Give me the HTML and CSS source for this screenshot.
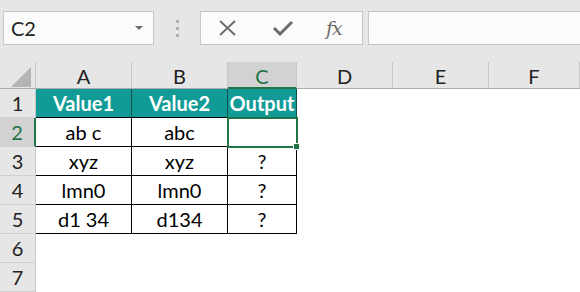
FILE: index.html
```html
<!doctype html>
<html>
    <head>
        <meta charset="utf-8" />
        <title>Sheet</title>
        <link rel="stylesheet" href="styles.css">
    </head>
    <body>
        <div class="formula-bar">
            <div class="name-box">
                <span>C2</span>
                <span class="caret"></span>
            </div>
            <div class="grip">
                <span></span><span></span><span></span>
            </div>
            <div class="fx-buttons">
                <svg class="icon cancel" width="19" height="16" viewBox="0 0 19 16">
                    <path d="M2 1 L17 15 M17 1 L2 15" stroke="#6b6b6b" stroke-width="1.8" fill="none" />
                </svg>
                <svg class="icon enter" width="20" height="16" viewBox="0 0 20 16">
                    <path d="M1 8 L7 14 L19 2" stroke="#6b6b6b" stroke-width="3" fill="none" />
                </svg>
                <span class="fx">fx</span>
            </div>
            <div class="formula-input"></div>
        </div>

        <div class="sheet">
            <div class="corner"><span class="tri"></span></div>
            <div class="col-head">A</div>
            <div class="col-head">B</div>
            <div class="col-head selected">C</div>
            <div class="col-head">D</div>
            <div class="col-head">E</div>
            <div class="col-head">F</div>

            <div class="row-head">1</div>
            <div class="cell head">Value1</div>
            <div class="cell head">Value2</div>
            <div class="cell head">Output</div>
            <div class="blank"></div>
            <div class="blank"></div>
            <div class="blank"></div>

            <div class="row-head selected">2</div>
            <div class="cell">ab c</div>
            <div class="cell">abc</div>
            <div class="cell active"></div>
            <div class="blank"></div>
            <div class="blank"></div>
            <div class="blank"></div>

            <div class="row-head">3</div>
            <div class="cell">xyz</div>
            <div class="cell">xyz</div>
            <div class="cell">?</div>
            <div class="blank"></div>
            <div class="blank"></div>
            <div class="blank"></div>

            <div class="row-head">4</div>
            <div class="cell">lmn0</div>
            <div class="cell">lmn0</div>
            <div class="cell">?</div>
            <div class="blank"></div>
            <div class="blank"></div>
            <div class="blank"></div>

            <div class="row-head">5</div>
            <div class="cell">d1 34</div>
            <div class="cell">d134</div>
            <div class="cell">?</div>
            <div class="blank"></div>
            <div class="blank"></div>
            <div class="blank"></div>

            <div class="row-head">6</div>
            <div class="blank"></div>
            <div class="blank"></div>
            <div class="blank"></div>
            <div class="blank"></div>
            <div class="blank"></div>
            <div class="blank"></div>

            <div class="row-head">7</div>
            <div class="blank"></div>
            <div class="blank"></div>
            <div class="blank"></div>
            <div class="blank"></div>
            <div class="blank"></div>
            <div class="blank"></div>
        </div>
    </body>
</html>
```

FILE: styles.css
```css
body {
    margin: 0;
    width: 580px;
    height: 292px;
    overflow: hidden;
    background: #fff;
    font-family: Lato, "Open Sans", sans-serif;
    font-size: 20px;
    color: #000;
}

/* top bar */
.formula-bar {
    display: flex;
    align-items: flex-start;
    height: 62px;
    padding: 11px 0 0 3px;
    box-sizing: border-box;
    background: #e6e6e6;
}

.name-box {
    display: flex;
    align-items: center;
    justify-content: space-between;
    width: 151px;
    height: 34px;
    padding: 0 10px 0 7px;
    box-sizing: border-box;
    background: #fbfbfb;
    border: 1px solid #c6c6c6;
    color: #222;
}

.caret {
    width: 0;
    height: 0;
    border-left: 4px solid transparent;
    border-right: 4px solid transparent;
    border-top: 4px solid #6b6b6b;
}

.grip {
    display: flex;
    flex-direction: column;
    align-items: center;
    gap: 4px;
    width: 46px;
    padding-top: 9px;
}

.grip span {
    width: 3px;
    height: 3px;
    background: #b0b0b0;
}

.fx-buttons {
    display: flex;
    align-items: center;
    width: 163px;
    height: 34px;
    padding-left: 17px;
    box-sizing: border-box;
    background: #fbfbfb;
    border: 1px solid #c6c6c6;
}

.icon.enter {
    margin-left: 36px;
}

.fx {
    margin-left: 33px;
    font-family: "DejaVu Serif", "Liberation Serif", serif;
    font-style: italic;
    font-size: 19px;
    color: #6b6b6b;
    letter-spacing: -1px;
}

.formula-input {
    flex: 1;
    height: 34px;
    margin-left: 5px;
    margin-right: -2px;
    box-sizing: border-box;
    background: #fbfbfb;
    border: 1px solid #c6c6c6;
}

/* grid */
.sheet {
    display: grid;
    grid-template-columns: 36px 96px 96px 69px 96px 96px 1fr;
    grid-template-rows: 27px repeat(7, 29px);
}

.sheet > div {
    box-sizing: border-box;
    display: flex;
    align-items: center;
    justify-content: center;
}

.corner {
    background: #e6e6e6;
    border-right: 1px solid #c8c8c8;
    border-bottom: 1px solid #ababab;
}

.tri {
    width: 0;
    height: 0;
    margin: 4px 0 0 6px;
    border-left: 20px solid transparent;
    border-bottom: 20px solid #b4b4b4;
}

.col-head {
    background: #e6e6e6;
    border-right: 1px solid #c8c8c8;
    border-bottom: 1px solid #ababab;
    color: #222;
    padding-top: 2px;
}

.col-head.selected {
    background: #d2d2d2;
    color: #217346;
    border-bottom: 2px solid #217346;
}

.row-head {
    background: #e6e6e6;
    border-right: 1px solid #c8c8c8;
    border-bottom: 1px solid #d0d0d0;
    color: #222;
}

.row-head.selected {
    background: #d2d2d2;
    color: #217346;
    border-right: 2px solid #217346;
}

.cell {
    background: #fff;
    border-right: 1px solid #000;
    border-bottom: 1px solid #000;
}

.cell.head {
    background: #129b96;
    color: #fff;
    font-weight: bold;
    border-right-color: #0f4f4d;
}

.cell.active {
    position: relative;
    outline: 2px solid #217346;
    outline-offset: -1px;
}

.cell.active::after {
    content: "";
    position: absolute;
    right: -4px;
    bottom: -4px;
    width: 5px;
    height: 5px;
    background: #217346;
    border: 1px solid #fff;
}

.blank {
    background: #fff;
}
```
